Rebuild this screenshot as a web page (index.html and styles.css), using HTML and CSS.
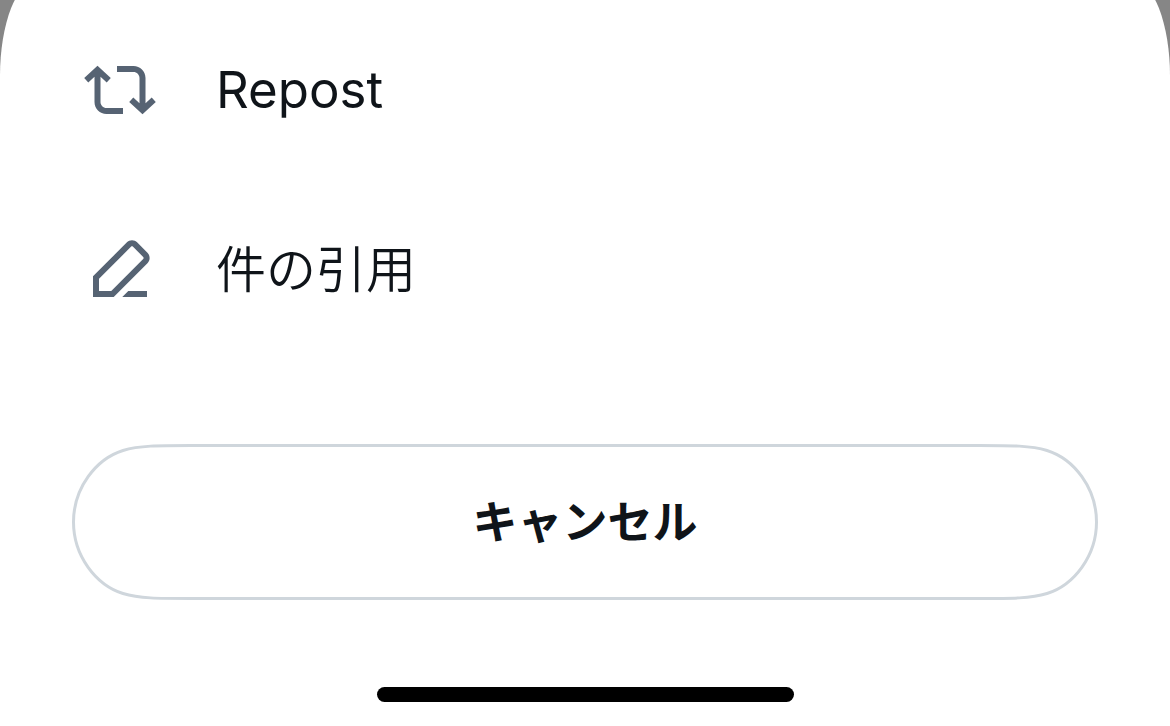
FILE: index.html
```
<!DOCTYPE html>
<html lang="ja">
<head>
    <meta charset="UTF-8">
    <meta name="viewport" content="width=device-width, initial-scale=1.0">
    <title>Repost</title>
    <link rel="stylesheet" href="styles.css">
</head>
<body>
    <main class="sheet">
        <div class="menu">
            <button class="menu-item" type="button">
                <svg class="icon" viewBox="0 0 24 24" aria-hidden="true">
                    <path d="M4.5 3.88l4.432 4.14-1.364 1.46L5.5 7.55V16c0 1.1.896 2 2 2H13v2H7.5c-2.209 0-4-1.79-4-4V7.55L1.432 9.48.068 8.02 4.5 3.88zM16.5 6H11V4h5.5c2.209 0 4 1.79 4 4v8.45l2.068-1.93 1.364 1.46-4.432 4.14-4.432-4.14 1.364-1.46 2.068 1.93V8c0-1.1-.896-2-2-2z"/>
                </svg>
                <span class="label">Repost</span>
            </button>
            <button class="menu-item" type="button">
                <svg class="icon" viewBox="0 0 24 24" aria-hidden="true">
                    <path d="M14.23 2.854c.98-.977 2.56-.977 3.54 0l3.38 3.378c.97.977.97 2.559 0 3.536L9.91 21H3v-6.914L14.23 2.854zm2.12 1.414c-.19-.195-.51-.195-.7 0L5 14.914V19h4.09L19.73 8.354c.2-.196.2-.512 0-.708l-3.38-3.378zM14.75 19l-2 2H21v-2h-6.25z"/>
                </svg>
                <span class="label label-ja">件の引用</span>
            </button>
        </div>

        <!-- smooth capsule: svg end caps, straight borders in between -->
        <button class="cancel" type="button">
            <svg class="cap" viewBox="0 0 130 156" aria-hidden="true">
                <path d="M130 1.5H119C86 1.5 67 1.5 51 6.5C24 15 1.5 44 1.5 78S24 141 51 149.5C67 154.5 86 154.5 119 154.5H130"/>
            </svg>
            <span class="cancel-text">キャンセル</span>
            <svg class="cap" viewBox="0 0 130 156" aria-hidden="true">
                <path d="M0 1.5H11C44 1.5 63 1.5 79 6.5C106 15 128.5 44 128.5 78S106 141 79 149.5C63 154.5 44 154.5 11 154.5H0"/>
            </svg>
        </button>

        <div class="home-indicator"></div>
    </main>
</body>
</html>
```
FILE: styles.css
```
* {
    box-sizing: border-box;
}

body {
    display: flex;
    flex-direction: column;
    min-height: 100vh;
    margin: 0;
    overflow: hidden;
    background: #868686;
    color: #0f1419;
    font-family: Inter, "Noto Sans CJK JP", sans-serif;
}

/* the rounded top runs off the top of the screen */
.sheet {
    display: flex;
    flex: 1;
    flex-direction: column;
    margin-top: -20px;
    padding: 20px 72px 24px;
    border-radius: 38px 38px 0 0 / 96px 96px 0 0;
    background: #fff;
}

button {
    border: none;
    background: none;
    color: inherit;
    font-family: inherit;
    cursor: pointer;
}

.menu {
    display: flex;
    flex-direction: column;
}

.menu-item {
    display: flex;
    align-items: center;
    gap: 60px;
    height: 180px;
    padding: 0 12px;
    text-align: left;
}

.icon {
    flex: none;
    width: 72px;
    height: 72px;
    fill: #566373;
}

.label {
    font-size: 51px;
    line-height: 72px;
}

.label-ja {
    font-size: 50px;
    font-weight: 350;
}

.cancel {
    display: flex;
    height: 156px;
    margin-top: 84px;
    padding: 0;
    font-size: 45px;
    font-weight: 700;
}

.cap {
    flex: none;
    width: 130px;
    height: 156px;
    fill: none;
    stroke: #cfd6dc;
    stroke-width: 3px;
}

.cancel-text {
    flex: 1;
    height: 156px;
    border: solid #cfd6dc;
    border-width: 3px 0;
    line-height: 152px;
    text-align: center;
}

.home-indicator {
    align-self: center;
    width: 417px;
    height: 15px;
    margin-top: auto;
    border-radius: 8px;
    background: #000;
}
```
